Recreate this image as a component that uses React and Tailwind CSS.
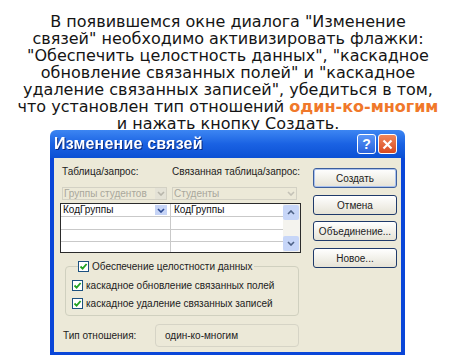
import React from "react";

const Chevron = ({ up = false, color = "#4d6185" }) => (
  <svg width="8" height="5" viewBox="0 0 8 5">
    <path
      d={up ? "M1 4 L4 1 L7 4" : "M1 1 L4 4 L7 1"}
      stroke={color}
      strokeWidth="1.6"
      fill="none"
    />
  </svg>
);

const Check = () => (
  <div className="w-[11px] h-[11px] border border-[#1c5180] bg-white flex items-center justify-center">
    <svg width="9" height="9" viewBox="0 0 9 9">
      <path d="M1.5 4.5 L3.6 6.6 L7.6 2" stroke="#21a121" strokeWidth="1.8" fill="none" />
    </svg>
  </div>
);

const XpButton = ({ children, focused }) => (
  <div
    className={
      "h-[20px] w-[84px] rounded-[3px] border flex items-center justify-center bg-gradient-to-b from-white to-[#e6e3d6] text-[10px] text-[#222] " +
      (focused ? "border-[#3c5e9c] shadow-[inset_0_0_0_1px_#a9c1ee]" : "border-[#1f3a6a]")
    }
  >
    {children}
  </div>
);

export default function App() {
  return (
    <div className="w-[474px] h-[355px] overflow-hidden bg-white font-['DejaVu_Sans',sans-serif]">
      <div className="w-[456px] h-[130px] pt-[13px] text-center text-[16px] leading-[17px] text-[#151515]">
        В появившемся окне диалога "Изменение
        <br />
        связей" необходимо активизировать флажки:
        <br />
        "Обеспечить целостность данных", "каскадное
        <br />
        обновление связанных полей" и "каскадное
        <br />
        удаление связанных записей", убедиться в том,
        <br />
        что установлен тип отношений{" "}
        <span className="font-bold text-[#f0782a]">один-ко-многим</span>
        <br />и нажать кнопку Создать.
      </div>

      <div className="relative ml-[50px] w-[355px] h-[225px] flex flex-col font-['Liberation_Sans',sans-serif]">
        {/* title bar */}
        <div className="h-[28px] rounded-t-[6px] bg-gradient-to-b from-[#3d86f2] via-[#1a62e3] to-[#0b50d4] flex items-center pl-[4px] pr-[8px]">
          <span className="text-white font-bold text-[16px] tracking-[0.2px] drop-shadow-[1px_1px_0_#0a2a80]">
            Изменение связей
          </span>
          <div className="ml-auto flex gap-[2px]">
            <div className="w-[19px] h-[20px] rounded-[3px] border border-white bg-gradient-to-b from-[#5a96f8] to-[#2a62dc] flex items-center justify-center text-white font-bold text-[14px] leading-none">
              ?
            </div>
            <div className="w-[19px] h-[20px] rounded-[3px] border border-white bg-gradient-to-b from-[#f0865a] to-[#d9491e] flex items-center justify-center">
              <svg width="11" height="11" viewBox="0 0 11 11">
                <path d="M1.5 1.5 L9.5 9.5 M9.5 1.5 L1.5 9.5" stroke="white" strokeWidth="2.2" />
              </svg>
            </div>
          </div>
        </div>

        {/* body */}
        <div className="flex-1 flex bg-[#ece9d8] border-x-[4px] border-b-[3px] border-[#0a46d8] text-[10px] text-[#222]">
          {/* left column */}
          <div className="w-[247px] pl-[6px] pt-[8px] flex flex-col">
            <div className="h-[12px] leading-[12px] flex pl-[2px]">
              <span className="w-[110px]">Таблица/запрос:</span>
              <span>Связанная таблица/запрос:</span>
            </div>

            <div className="mt-[9px] h-[13px] flex pl-[2px] gap-[5px]">
              <div className="w-[105px] border border-[#d3d1c4] bg-[#ece9d8] flex items-center">
                <span className="flex-1 pl-[1px] text-[#a9a79c] leading-none">Группы студентов</span>
                <div className="w-[11px] h-full bg-[#e4e2d6] flex items-center justify-center">
                  <Chevron color="#b8b6ab" />
                </div>
              </div>
              <div className="w-[125px] border border-[#d3d1c4] bg-[#ece9d8] flex items-center">
                <span className="flex-1 pl-[1px] text-[#a9a79c] leading-none">Студенты</span>
                <div className="w-[11px] h-full flex items-center justify-center">
                  <Chevron color="#c4c2b7" />
                </div>
              </div>
            </div>

            {/* grid */}
            <div className="mt-[3px] w-[241px] h-[50px] border border-[#2b2b2b] bg-white flex">
              <div className="w-[222px] flex flex-col">
                <div className="h-[13px] flex border-b border-[#c9c9c9]">
                  <div className="w-[110px] border-r border-[#c9c9c9] flex items-center pl-[2px] pr-[3px]">
                    <span className="flex-1 leading-none text-[#111]">КодГруппы</span>
                    <div className="w-[12px] h-[10px] bg-[#c6d4f6] flex items-center justify-center">
                      <Chevron color="#2c4a94" />
                    </div>
                  </div>
                  <div className="flex-1 flex items-center pl-[3px]">
                    <span className="leading-none text-[#111]">КодГруппы</span>
                  </div>
                </div>
                <div className="h-[13px] flex border-b border-[#c9c9c9]">
                  <div className="w-[110px] border-r border-[#c9c9c9]" />
                </div>
                <div className="h-[12px] flex border-b border-[#c9c9c9]">
                  <div className="w-[110px] border-r border-[#c9c9c9]" />
                </div>
                <div className="flex-1 flex">
                  <div className="w-[110px] border-r border-[#c9c9c9]" />
                </div>
              </div>
              <div className="flex-1 bg-[#f4f3ee] flex flex-col justify-between py-[1px] pr-[1px]">
                <div className="h-[15px] rounded-[2px] bg-[#c7d6f8] flex items-center justify-center">
                  <Chevron up color="#4d6185" />
                </div>
                <div className="h-[15px] rounded-[2px] bg-[#c7d6f8] flex items-center justify-center">
                  <Chevron color="#4d6185" />
                </div>
              </div>
            </div>

            {/* checkbox group */}
            <fieldset className="mt-[8px] ml-[5px] w-[234px] border border-[#d0d0bf] rounded-[4px] pl-[6px] pb-[6px]">
              <legend className="ml-[6px] flex items-center bg-[#ece9d8] pr-[2px]">
                <Check />
                <span className="ml-[3px] leading-[11px]">Обеспечение целостности данных</span>
              </legend>
              <div className="mt-[8px] h-[11px] flex items-center">
                <Check />
                <span className="ml-[3px] leading-[11px]">каскадное обновление связанных полей</span>
              </div>
              <div className="mt-[7px] h-[11px] flex items-center">
                <Check />
                <span className="ml-[3px] leading-[11px]">каскадное удаление связанных записей</span>
              </div>
            </fieldset>

            {/* relation type */}
            <div className="mt-[8px] flex items-center pl-[3px]">
              <span className="w-[92px]">Тип отношения:</span>
              <div className="w-[144px] h-[23px] border border-[#d6d4c6] rounded-[4px] flex items-center pl-[9px]">
                один-ко-многим
              </div>
            </div>
          </div>

          {/* right column */}
          <div className="ml-[12px] pt-[10px] flex flex-col">
            <XpButton focused>Создать</XpButton>
            <div className="mt-[7px]">
              <XpButton>Отмена</XpButton>
            </div>
            <div className="mt-[6px]">
              <XpButton>Объединение...</XpButton>
            </div>
            <div className="mt-[7px]">
              <XpButton>Новое...</XpButton>
            </div>
          </div>
        </div>
      </div>
    </div>
  );
}
